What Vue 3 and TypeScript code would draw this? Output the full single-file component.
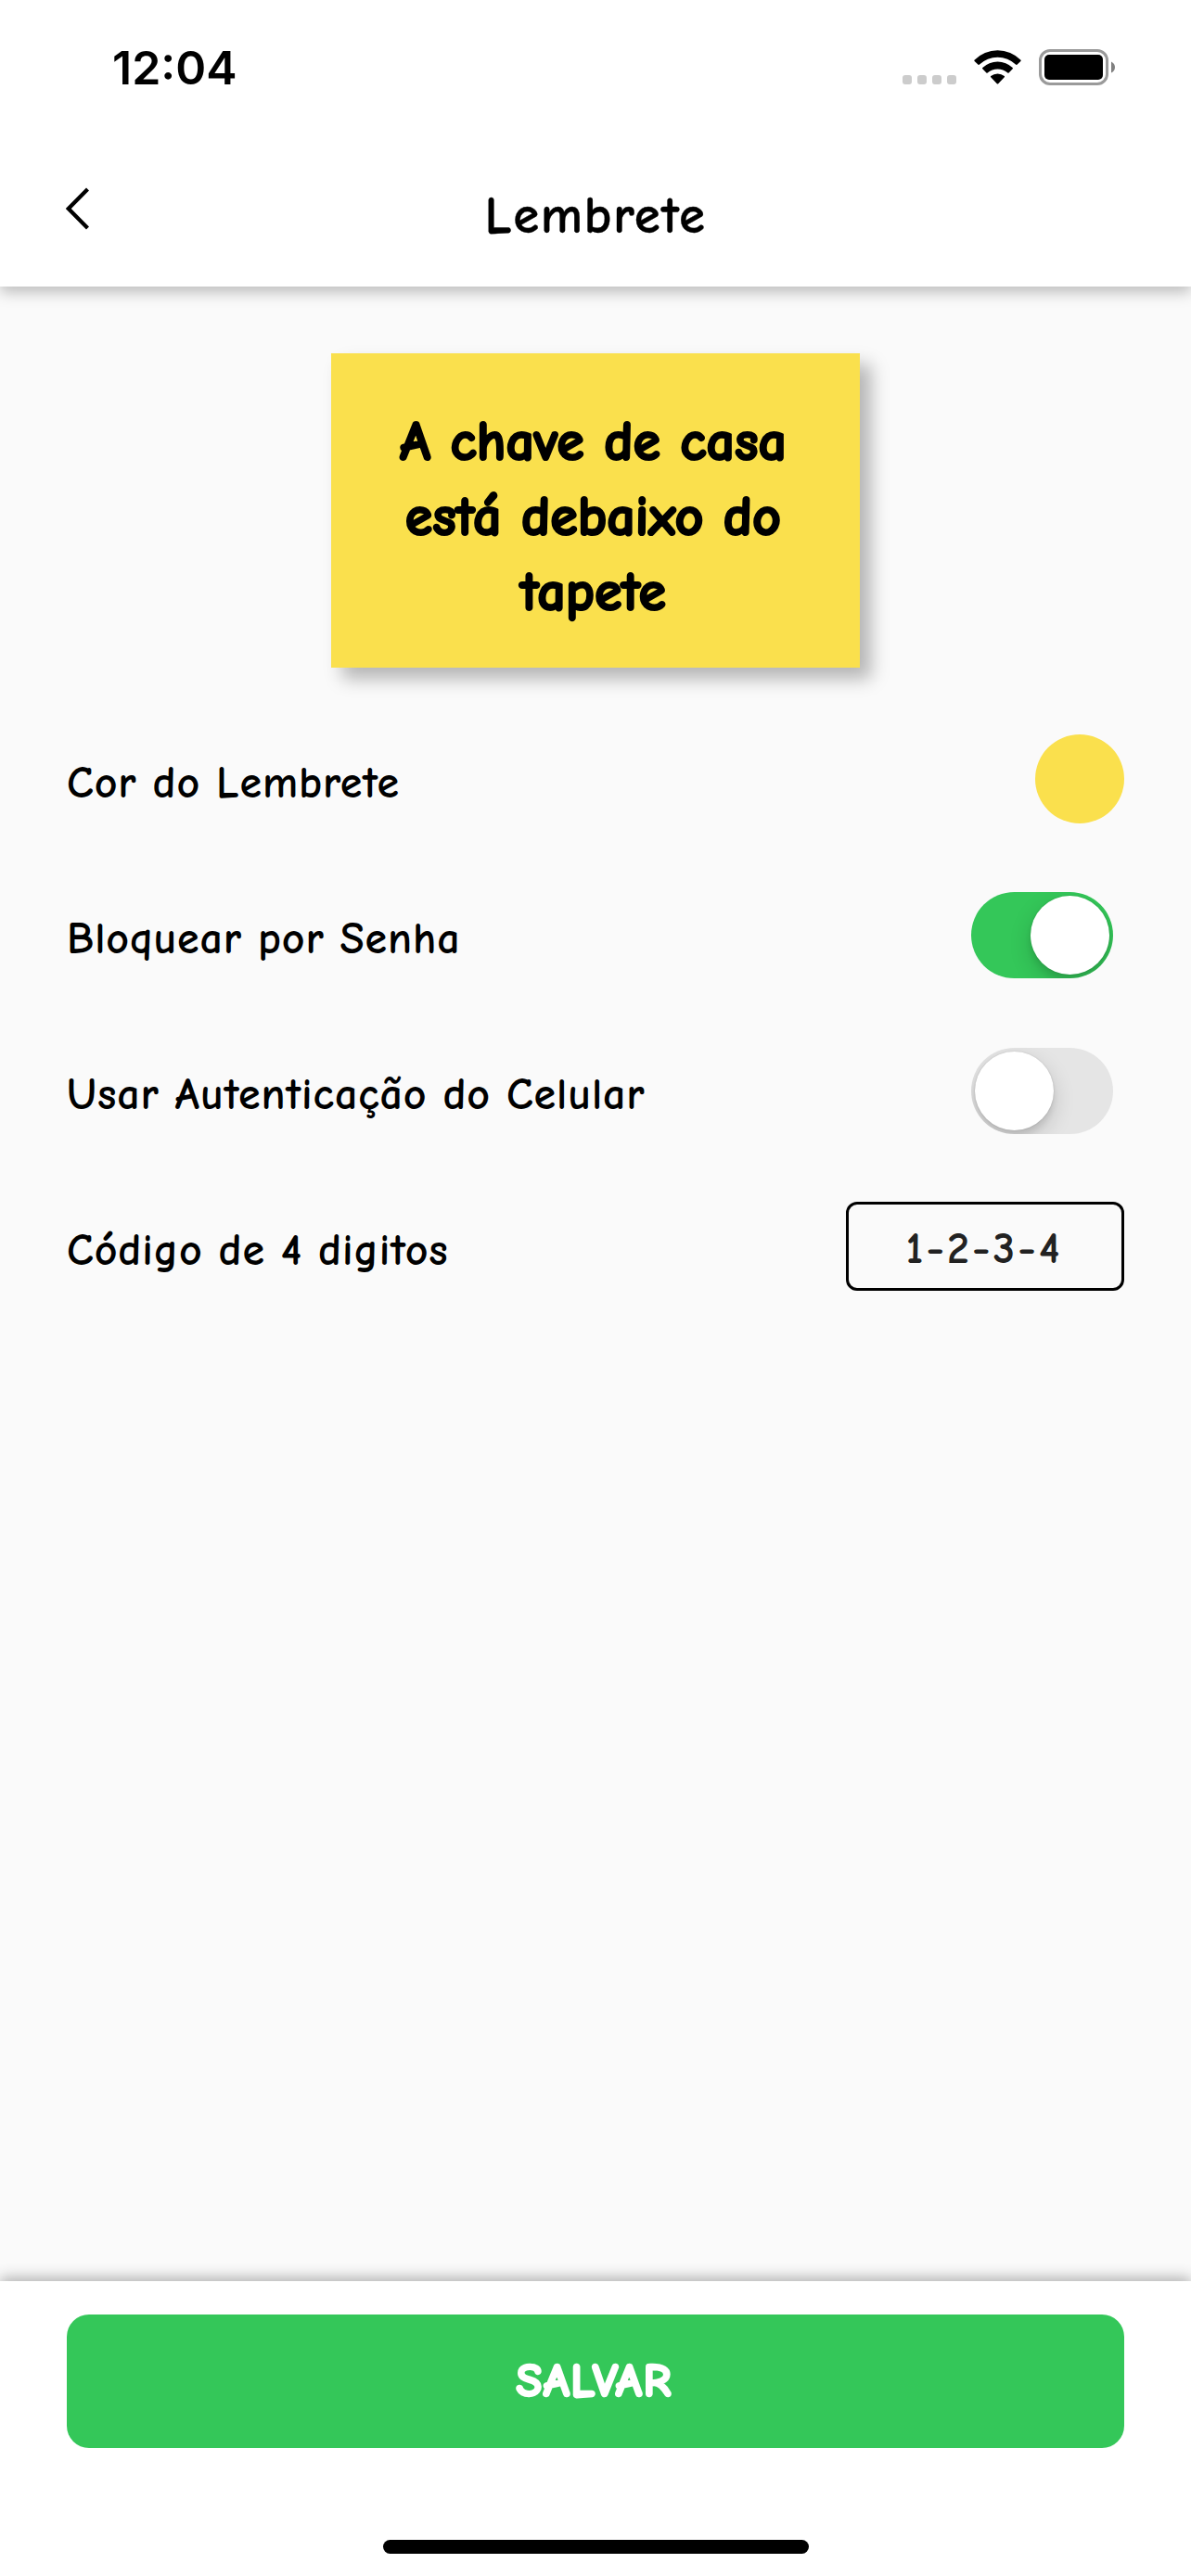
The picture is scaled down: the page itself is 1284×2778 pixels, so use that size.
<script setup lang="ts">
import { computed, ref } from 'vue'

const noteColor = ref('#fae04d')
const noteLines = ['A chave de casa', 'está debaixo do', 'tapete']
const locked = ref(true)
const useDeviceAuth = ref(false)
const digits = ref([1, 2, 3, 4])
const code = computed(() => digits.value.join('-'))
</script>

<template>
  <div class="screen">
    <header class="top">
      <div class="status">
        <span class="time">12:04</span>
        <div class="indicators">
          <div class="signal"><i v-for="n in 4" :key="n"></i></div>
          <svg class="wifi" width="51" height="38" viewBox="0 0 51 38">
            <path d="M.5 10.8A35 35 0 0 1 50.5 10.8Q51 11.4 50.4 12L46.4 15.7Q45.7 16.2 45 15.6A28 28 0 0 0 6 15.6Q5.3 16.2 4.6 15.7L.6 12Q0 11.4.5 10.8Z" />
            <path d="M9.3 19A23.5 23.5 0 0 1 41.7 19Q42.3 19.6 41.7 20.2L37.6 24.4Q37 25 36.3 24.4A17 17 0 0 0 14.7 24.4Q14 25 13.4 24.4L9.3 20.2Q8.7 19.6 9.3 19Z" />
            <path d="M18.2 28A11.5 11.5 0 0 1 32.8 28Q33.4 28.7 32.8 29.3L26.2 36.2Q25.5 36.9 24.8 36.2L18.2 29.3Q17.6 28.7 18.2 28Z" />
          </svg>
          <svg class="battery" width="82" height="39" viewBox="0 0 82 39">
            <rect x="1.5" y="1.5" width="72" height="36" rx="10.5" fill="none" stroke="#9a9a9a" stroke-width="3" />
            <rect x="6" y="6" width="63" height="27" rx="5" />
            <path d="M78 13.5Q82 15.5 82 19.5T78 25.5Z" fill="#808080" />
          </svg>
        </div>
      </div>
      <nav class="bar">
        <svg class="back" width="30" height="48" viewBox="0 0 30 48">
          <path d="M23.5 3L2.8 24L23.5 45" fill="none" stroke="#000" stroke-width="4.2" />
        </svg>
        <h1 class="title">Lembrete</h1>
      </nav>
    </header>

    <main class="content">
      <section class="note" :style="{ background: noteColor }">
        <p v-for="(line, i) in noteLines" :key="i" class="note-line">{{ line }}</p>
      </section>

      <div class="row">
        <span class="label">Cor do Lembrete</span>
        <span class="swatch" :style="{ background: noteColor }"></span>
      </div>
      <div class="row">
        <span class="label">Bloquear por Senha</span>
        <button class="toggle" :class="{ on: locked }" @click="locked = !locked"><span class="knob"></span></button>
      </div>
      <div class="row">
        <span class="label">Usar Autenticação do Celular</span>
        <button class="toggle" :class="{ on: useDeviceAuth }" @click="useDeviceAuth = !useDeviceAuth"><span class="knob"></span></button>
      </div>
      <div class="row">
        <span class="label">Código de 4 digitos</span>
        <div class="code"><span>{{ code }}</span></div>
      </div>
    </main>

    <footer class="bottom">
      <button class="save"><span>SALVAR</span></button>
      <div class="home"></div>
    </footer>
  </div>
</template>

<style>
body {
  margin: 0;
}
</style>

<style scoped>
.screen {
  width: 1284px;
  height: 2778px;
  display: flex;
  flex-direction: column;
  overflow: hidden;
  background: #fafafa;
  color: #000;
  font-family: 'Comic Neue', Inter, 'Open Sans', sans-serif;
  font-variant-ligatures: none;
}
.top {
  height: 309px;
  flex: none;
  background: #fff;
  box-shadow: 0 6px 15px rgba(0, 0, 0, 0.25);
}
.status {
  height: 141px;
  display: flex;
  justify-content: space-between;
  padding: 0 82px 0 121px;
}
.time {
  font: 600 50px/60px Inter, sans-serif;
  padding-top: 43px;
}
.indicators {
  display: flex;
  padding-top: 53px;
}
.signal {
  display: flex;
  gap: 6px;
  padding-top: 28px;
}
.signal i {
  width: 10px;
  height: 10px;
  border-radius: 3px;
  background: #ccc;
}
.wifi {
  margin: 1px 19px 0 19px;
}
.bar {
  height: 168px;
  display: grid;
  grid-template-columns: 142px 1fr 142px;
}
.back {
  margin: 60px 0 0 71px;
}
.title {
  margin: 60px 0 0;
  text-align: center;
  font-weight: 700;
  font-size: 57px;
  line-height: 64px;
  letter-spacing: 1.5px;
  -webkit-text-stroke: 0.3px #000;
}
.content {
  flex: 1;
  display: flex;
  flex-direction: column;
  padding: 72px 72px 0;
}
.note {
  width: 570px;
  height: 339px;
  box-sizing: border-box;
  align-self: center;
  padding: 55px 5px 0 0;
  margin-bottom: 36px;
  box-shadow: 12px 12px 18px rgba(0, 0, 0, 0.28);
}
.note-line {
  margin: 0;
  text-align: center;
  font-weight: 700;
  font-size: 60px;
  line-height: 81px;
  white-space: nowrap;
  -webkit-text-stroke: 2.2px #000;
}
.row {
  height: 168px;
  display: flex;
  align-items: center;
  justify-content: space-between;
}
.label {
  font-size: 48px;
  line-height: 60px;
  font-weight: 700;
  letter-spacing: 0.85px;
  word-spacing: -1px;
  padding-top: 9px;
  white-space: nowrap;
}
.swatch {
  width: 96px;
  height: 96px;
  border-radius: 50%;
}
.toggle {
  width: 153px;
  height: 93px;
  box-sizing: border-box;
  border: 0;
  border-radius: 47px;
  margin: 0 12px 0 0;
  padding: 4px;
  display: flex;
  align-items: center;
  overflow: hidden;
  background: #e5e5e5;
}
.toggle.on {
  justify-content: flex-end;
  background: #34c759;
}
.knob {
  width: 85px;
  height: 85px;
  border-radius: 50%;
  background: #fff;
  box-shadow: 0 9px 24px rgba(0, 0, 0, 0.16), 0 6px 6px rgba(0, 0, 0, 0.08), 0 0 2px rgba(0, 0, 0, 0.15);
}
.code {
  width: 300px;
  height: 96px;
  box-sizing: border-box;
  border: 3px solid #000;
  border-radius: 12px;
  padding: 5px 2px 0 0;
  display: flex;
  align-items: center;
  justify-content: center;
  color: #222;
  font-size: 48px;
  line-height: 60px;
  font-weight: 700;
  letter-spacing: 3px;
}
.bottom {
  height: 318px;
  flex: none;
  box-sizing: border-box;
  padding: 36px 72px 0;
  background: #fff;
  box-shadow: 0 -3px 15px rgba(0, 0, 0, 0.32);
}
.save {
  display: block;
  width: 100%;
  height: 144px;
  border: 0;
  border-radius: 24px;
  padding: 0 3px 2px 0;
  background: #34c759;
  color: #fff;
  font-family: inherit;
  font-weight: 700;
  font-size: 51px;
  letter-spacing: 1.4px;
  -webkit-text-stroke: 2.6px #fff;
}
.home {
  width: 459px;
  height: 15px;
  border-radius: 8px;
  margin: 99px 0 0 341px;
  background: #000;
}
</style>
